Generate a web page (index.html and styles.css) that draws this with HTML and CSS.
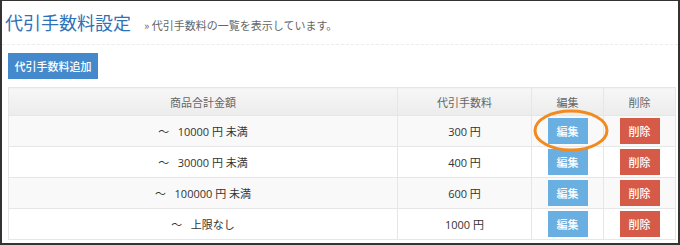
FILE: index.html
```html
<!DOCTYPE html>
<html>
<head>
  <title>代引手数料設定</title>
  <link rel="stylesheet" href="styles.css">
</head>
<body>
  <div class="page-head">
    <h1 class="title">代引手数料設定</h1>
    <span class="lead">&raquo; 代引手数料の一覧を表示しています。</span>
  </div>
  <div class="content">
    <button class="btn btn-add">代引手数料追加</button>
    <table class="list">
      <thead>
        <tr>
          <th class="col-range">商品合計金額</th>
          <th class="col-fee">代引手数料</th>
          <th class="col-btn">編集</th>
          <th class="col-btn">削除</th>
        </tr>
      </thead>
      <tbody>
        <tr>
          <td>〜&nbsp;&nbsp;&nbsp;10000 円 未満</td>
          <td>300 円</td>
          <td class="marked">
            <button class="btn btn-edit">編集</button>
            <svg class="mark" width="78" height="45" viewBox="0 0 78 45">
              <ellipse cx="39" cy="22.5" rx="36" ry="19.5" fill="none" stroke="#f28a1e" stroke-width="3"/>
            </svg>
          </td>
          <td><button class="btn btn-del">削除</button></td>
        </tr>
        <tr>
          <td>〜&nbsp;&nbsp;&nbsp;30000 円 未満</td>
          <td>400 円</td>
          <td><button class="btn btn-edit">編集</button></td>
          <td><button class="btn btn-del">削除</button></td>
        </tr>
        <tr>
          <td>〜&nbsp;&nbsp;&nbsp;100000 円 未満</td>
          <td>600 円</td>
          <td><button class="btn btn-edit">編集</button></td>
          <td><button class="btn btn-del">削除</button></td>
        </tr>
        <tr>
          <td>〜&nbsp;&nbsp;&nbsp;上限なし</td>
          <td>1000 円</td>
          <td><button class="btn btn-edit">編集</button></td>
          <td><button class="btn btn-del">削除</button></td>
        </tr>
      </tbody>
    </table>
  </div>
</body>
</html>
```

FILE: styles.css
```css
html {
  background-color: #fff;
}

body {
  margin: 0;
  width: 680px;
  height: 245px;
  box-sizing: border-box;
  border: 2px solid #333;
  border-top-width: 1px;
  overflow: hidden;
  font-family: "Open Sans", "Noto Sans CJK JP", sans-serif;
  color: #333;
  background-color: #fff;
}

.page-head {
  display: flex;
  align-items: baseline;
  height: 44px;
  padding-left: 3px;
  border-bottom: 1px dashed #ececec;
  box-sizing: border-box;
}

.title {
  margin: 0;
  font-size: 18px;
  font-weight: normal;
  line-height: 42px;
  color: #2f71b6;
  font-family: "Noto Sans CJK JP", sans-serif;
}

.lead {
  margin-left: 13px;
  font-size: 11px;
  color: #666;
  font-family: "Noto Sans CJK JP", sans-serif;
}

.content {
  padding: 8px 2px 0 6px;
}

.btn {
  border: none;
  color: #fff;
  font-family: "Noto Sans CJK JP", sans-serif;
  font-size: 11px;
  font-weight: 500;
  padding: 0;
  cursor: pointer;
}

.btn-add {
  display: block;
  width: 90px;
  height: 26px;
  background-color: #4389cb;
}

.list {
  margin-top: 8px;
  width: 668px;
  border-collapse: collapse;
  border: 1px solid #e2e2e2;
  font-size: 11px;
}

.list th,
.list td {
  border: 1px solid #e6e6e6;
  text-align: center;
  padding: 0;
}

.list th {
  height: 27px;
  font-weight: normal;
  color: #666;
  background: linear-gradient(#f7f7f7, #ececec);
  font-family: "Noto Sans CJK JP", sans-serif;
}

.list td {
  height: 30px;
}

.list tbody tr:nth-child(odd) td {
  background-color: #f9f9f9;
}

.col-range {
  width: 388px;
}

.col-fee {
  width: 133px;
}

.col-btn {
  width: 71px;
}

.btn-edit,
.btn-del {
  width: 40px;
  height: 26px;
  vertical-align: middle;
}

.btn-edit {
  background-color: #6aafe1;
}

.btn-del {
  background-color: #d55a48;
}

.marked {
  position: relative;
}

.mark {
  position: absolute;
  left: 0;
  top: -8px;
  pointer-events: none;
}
```
